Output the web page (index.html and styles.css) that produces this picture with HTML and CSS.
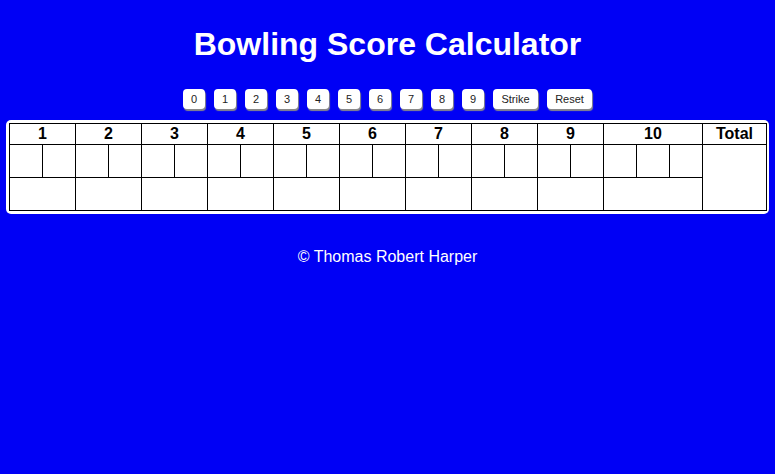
FILE: index.html
```html
<!DOCTYPE html>
<html>
<head>
<meta charset="utf-8">
<title>Bowling Score Calculator</title>
<link rel="stylesheet" href="styles.css">
</head>
<body>
<h1 class="title">Bowling Score Calculator</h1>
<div class="pins">
  <button class="pin">0</button>
  <button class="pin">1</button>
  <button class="pin">2</button>
  <button class="pin">3</button>
  <button class="pin">4</button>
  <button class="pin">5</button>
  <button class="pin">6</button>
  <button class="pin">7</button>
  <button class="pin">8</button>
  <button class="pin">9</button>
  <button class="pin wide">Strike</button>
  <button class="pin wide">Reset</button>
</div>
<div class="card">
  <div class="sheet">
    <div class="hd f2">1</div>
    <div class="hd f2">2</div>
    <div class="hd f2">3</div>
    <div class="hd f2">4</div>
    <div class="hd f2">5</div>
    <div class="hd f2">6</div>
    <div class="hd f2">7</div>
    <div class="hd f2">8</div>
    <div class="hd f2">9</div>
    <div class="hd f3">10</div>
    <div class="hd">Total</div>

    <div class="roll"></div><div class="roll"></div>
    <div class="roll"></div><div class="roll"></div>
    <div class="roll"></div><div class="roll"></div>
    <div class="roll"></div><div class="roll"></div>
    <div class="roll"></div><div class="roll"></div>
    <div class="roll"></div><div class="roll"></div>
    <div class="roll"></div><div class="roll"></div>
    <div class="roll"></div><div class="roll"></div>
    <div class="roll"></div><div class="roll"></div>
    <div class="roll"></div><div class="roll"></div><div class="roll"></div>
    <div class="total"></div>

    <div class="score f2"></div>
    <div class="score f2"></div>
    <div class="score f2"></div>
    <div class="score f2"></div>
    <div class="score f2"></div>
    <div class="score f2"></div>
    <div class="score f2"></div>
    <div class="score f2"></div>
    <div class="score f2"></div>
    <div class="score f3"></div>
  </div>
</div>
<p class="footer">© Thomas Robert Harper</p>
</body>
</html>
```
FILE: styles.css
```css
html, body {
  margin: 0;
  padding: 0;
}
body {
  background: #0000f5;
  font-family: "Liberation Sans", Arial, Helvetica, sans-serif;
  color: #fff;
}
.title {
  margin: 0;
  padding-top: 26px;
  font-size: 32px;
  line-height: 36px;
  font-weight: bold;
  text-align: center;
  color: #fff;
}
.pins {
  margin-top: 27px;
  display: flex;
  justify-content: center;
  gap: 9px;
}
.pin {
  height: 20px;
  min-width: 22px;
  padding: 0 6px;
  border: none;
  border-radius: 4px;
  background: #fff;
  color: #222;
  font-family: "Liberation Sans", Arial, Helvetica, sans-serif;
  font-size: 11px;
  line-height: 20px;
  box-shadow: 1px 2px 1px #8a8a8a;
}
.wide {
  padding: 0 8px;
  min-width: 45px;
}
.card {
  margin: 11px 6px 0 6px;
  padding: 3px;
  background: #fff;
  border-radius: 5px;
}
.sheet {
  display: grid;
  grid-template-columns: repeat(21, 32px) 63px;
  grid-template-rows: 20px 32px 32px;
  gap: 1px;
  padding: 1px;
  background: #000;
  width: max-content;
}
.sheet > div {
  background: #fff;
  color: #000;
}
.hd {
  font-weight: bold;
  font-size: 16px;
  line-height: 20px;
  text-align: center;
}
.f2 {
  grid-column: span 2;
}
.f3 {
  grid-column: span 3;
}
.total {
  grid-row: span 2;
}
.footer {
  margin: 34px 0 0 0;
  font-size: 16px;
  line-height: 18px;
  text-align: center;
  color: #fff;
}
```
